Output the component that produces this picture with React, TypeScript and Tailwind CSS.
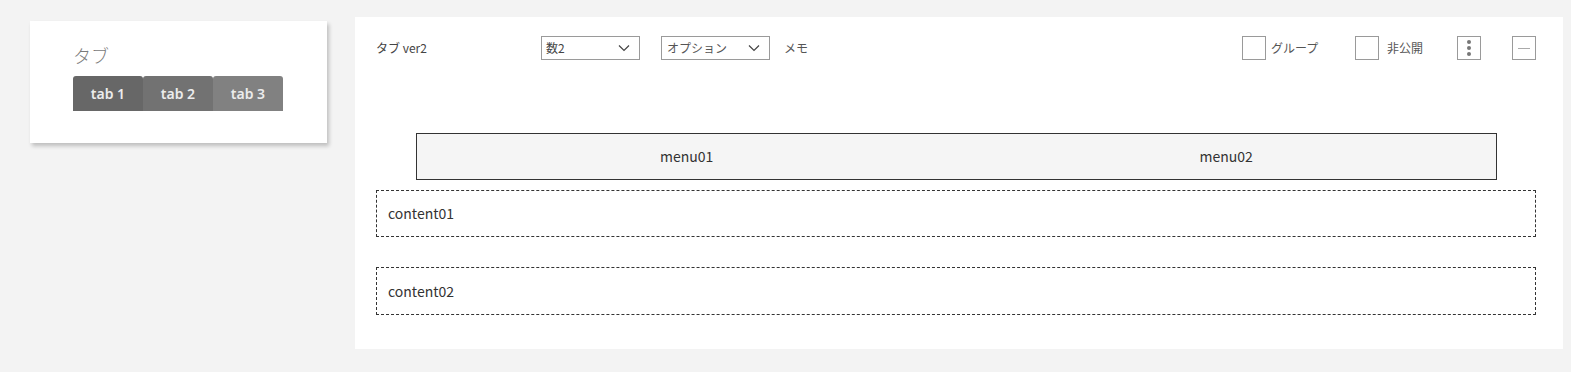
import React from "react";

const Chevron = () => (
  <svg width="12" height="8" viewBox="0 0 12 8" fill="none">
    <path d="M1 1.5L6 6.5L11 1.5" stroke="#444" strokeWidth="1.2" />
  </svg>
);

export default function App() {
  return (
    <div
      className="w-[1571px] h-[372px] bg-[#f3f3f3] flex items-start text-[#333]"
      style={{ fontFamily: '"Noto Sans CJK JP", "Noto Sans", sans-serif' }}
    >
      {/* left card */}
      <div className="ml-[30px] mt-[21px] w-[297px] h-[122px] bg-white shadow-[2px_3px_4px_rgba(0,0,0,0.22)] pl-[43px] pt-[21px]">
        <div className="text-[18px] leading-[26px] text-[#7a7a7a] font-light">タブ</div>
        <div className="flex mt-[8px]" style={{ fontFamily: '"Noto Sans", sans-serif' }}>
          <div className="w-[70px] h-[35px] bg-[#676767] rounded-t-[3px] flex items-center justify-center text-[14px] font-semibold text-[#ececec]">tab 1</div>
          <div className="w-[70px] h-[35px] bg-[#727272] rounded-t-[3px] flex items-center justify-center text-[14px] font-semibold text-[#ececec]">tab 2</div>
          <div className="w-[70px] h-[35px] bg-[#818181] rounded-t-[3px] flex items-center justify-center text-[14px] font-semibold text-[#ececec]">tab 3</div>
        </div>
      </div>

      {/* right panel */}
      <div className="ml-[28px] mt-[17px] w-[1208px] h-[332px] bg-white pl-[21px] pr-[27px] pt-[19px]">
        <div className="flex items-center h-[24px] text-[12px]">
          <div className="w-[165px] text-[#444]">タブ ver2</div>
          <div className="w-[99px] h-[24px] border border-[#9a9a9a] flex items-center justify-between pl-[4px] pr-[9px] text-[#444]">
            <span>数2</span>
            <Chevron />
          </div>
          <div className="ml-[21px] w-[109px] h-[24px] border border-[#9a9a9a] flex items-center justify-between pl-[5px] pr-[9px] text-[#555]">
            <span>オプション</span>
            <Chevron />
          </div>
          <div className="ml-[14px] text-[#555]">メモ</div>
          <div className="flex-1" />
          <div className="w-[24px] h-[24px] border border-[#9a9a9a]" />
          <div className="ml-[5px] w-[84px] text-[#555]">グループ</div>
          <div className="w-[24px] h-[24px] border border-[#9a9a9a]" />
          <div className="ml-[8px] w-[70px] text-[#555]">非公開</div>
          <div className="w-[24px] h-[24px] border border-[#9a9a9a] flex flex-col items-center justify-center gap-[2px]">
            <span className="w-[4px] h-[4px] rounded-full bg-[#777]" />
            <span className="w-[4px] h-[4px] rounded-full bg-[#777]" />
            <span className="w-[4px] h-[4px] rounded-full bg-[#777]" />
          </div>
          <div className="ml-[31px] w-[24px] h-[24px] border border-[#9a9a9a] flex items-center justify-center">
            <span className="w-[12px] h-[1px] bg-[#aaa]" />
          </div>
        </div>

        <div className="mt-[73px] ml-[40px] w-[1081px] h-[47px] bg-[#f5f5f5] border border-[#333] flex items-center text-[14px] text-[#333]">
          <div className="flex-1 text-center">menu01</div>
          <div className="flex-1 text-center">menu02</div>
        </div>

        <div className="mt-[10px] w-[1160px] h-[47px] border border-dashed border-[#333] flex items-center pl-[11px] text-[14px] text-[#333]">
          content01
        </div>
        <div className="mt-[30px] w-[1160px] h-[48px] border border-dashed border-[#333] flex items-center pl-[11px] text-[14px] text-[#333]">
          content02
        </div>
      </div>
    </div>
  );
}
